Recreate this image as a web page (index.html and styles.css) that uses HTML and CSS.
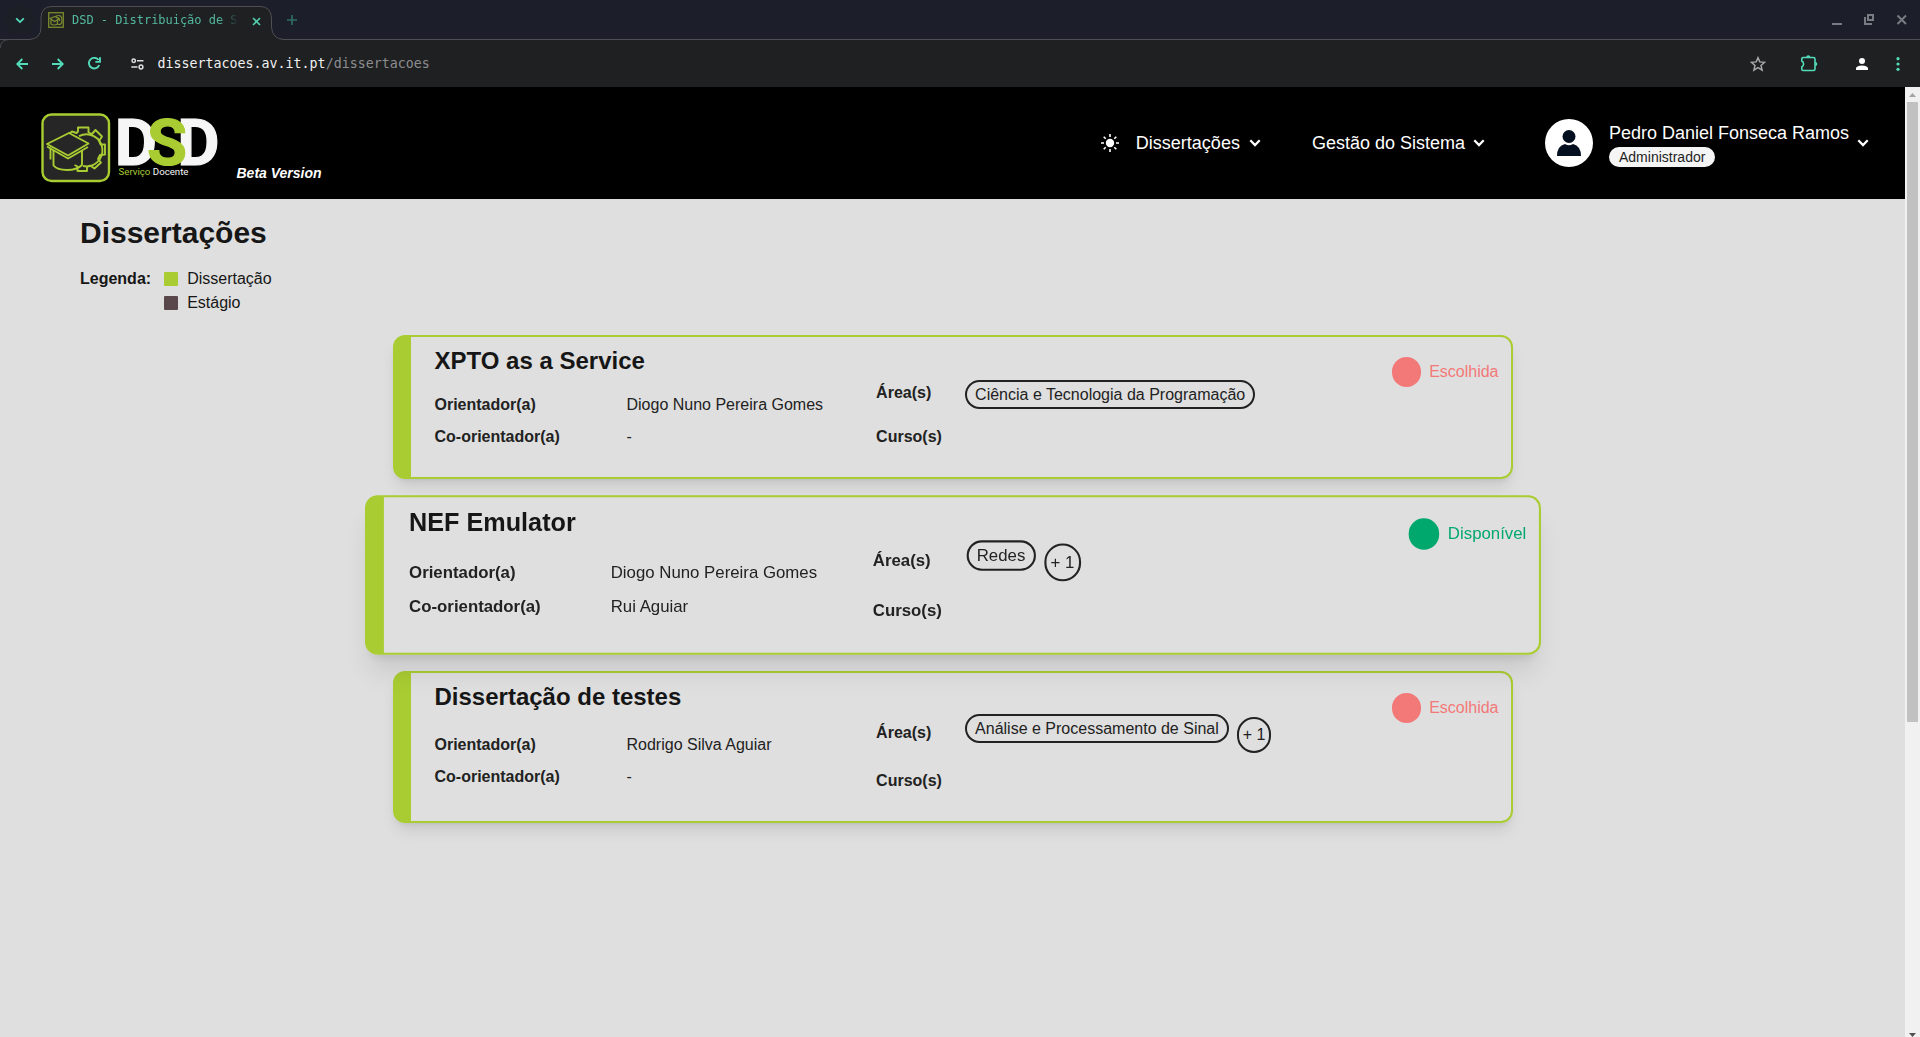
FILE: index.html
```html
<!DOCTYPE html>
<html lang="pt">
<head>
<meta charset="utf-8">
<title>DSD - Distribuição de Serviço Docente</title>
<link rel="stylesheet" href="styles.css">
</head>
<body>
<svg class="defs" width="0" height="0">
  <symbol id="chevron" viewBox="0 0 12 8"><path d="M1.3 1.3 6 6 10.7 1.3" fill="none" stroke="currentColor" stroke-width="2.3"/></symbol>
  <symbol id="emblem" viewBox="0 0 70 70">
    <rect x="1.5" y="1.5" width="66.5" height="66.5" rx="9" fill="#262626" stroke="#a9cc32" stroke-width="2.4"/>
    <g fill="none" stroke="#a9cc32" stroke-width="1.9" stroke-linejoin="round">
      <path d="M28 20.500L31 18.500L35.500 20L37 18.500V14.500H47.500V19.500L51 21L54.500 17L61 23.500L58 28L59.500 31.500H64V41.500L59 42L57 46L60 49.500L53.500 55.500L49 52.500L46 54V58H36.500V53.500L33.500 52"/>
      <path d="M38 23.200A16 16 0 1 1 42 53"/>
      <path d="M6 31 28 20 47.500 30.500 27 42.500Z" fill="#262626"/>
      <path d="M6 33.500 27 45.500 47 34" />
      <path d="M12.500 37V52.500Q16 57 26 57T41 52V37.500"/>
      <path d="M9.500 34.500V46.500"/>
    </g>
  </symbol>
</svg>
<div class="window">
  <div class="tabstrip">
    <div class="tab-search"><svg width="10" height="7" viewBox="0 0 10 7"><path d="M1.200 1.300 5 5.100 8.800 1.300" fill="none" stroke="#53dcba" stroke-width="1.800"/></svg></div>
    <div class="tab">
      <svg class="tab-shape" width="284" height="42" viewBox="0 0 284 42"><path d="M0 47V42C0 39 4 33.500 9 33.500H29Q41 33 41 21V12Q41 .5 52 .5H260Q271 .5 271.500 12V21Q272 33 284 33.500V47Z" fill="#1f2022"/><path d="M0 42Q1 33.500 9 33.500H29Q41 33 41 21V12Q41 .5 52 .5H260Q271 .5 271.500 12V21Q272 33 284 33.500" fill="none" stroke="#4e4e54"/></svg>
      <svg class="favicon" width="16" height="16" viewBox="0 0 16 16"><rect x=".7" y=".7" width="14.600" height="14.600" fill="#262626" stroke="#79882c" stroke-width="1.300"/><path d="M2 6.500 7 4.500 11 6.800 6.500 9.500ZM3 8V12Q6 14 9.500 12V8M8 4Q14 2 14 8T9 12M9.500 5.500Q12 6 11.500 9" fill="none" stroke="#7b8d2e" stroke-width="1.200"/></svg>
      <span class="tab-title">DSD - Distribuição de S</span>
      <svg class="tab-close" width="9" height="9" viewBox="0 0 9 9"><path d="M1 1 8 8M8 1 1 8" stroke="#53c9ab" stroke-width="1.700"/></svg>
    </div>
    <svg class="new-tab" width="10" height="10" viewBox="0 0 10 10"><path d="M5 0V10M0 5H10" stroke="#2f6c63" stroke-width="1.700"/></svg>
    <div class="window-buttons">
      <svg width="76" height="12" viewBox="0 0 76 12" fill="none" stroke="#797b82"><path d="M0 10H10" stroke-width="2"/><path d="M36 1H41V6H36Z M33 3V10H40" stroke-width="2"/><path d="M65.500 1.500 74 10M74 1.500 65.500 10" stroke-width="2"/></svg>
    </div>
  </div>
  <div class="toolbar">
    <div class="nav-icons">
      <svg width="12" height="12" viewBox="0 0 12 12"><path d="M12 6H1.500M6.300 1 1.300 6 6.300 11"/></svg>
      <svg width="12" height="12" viewBox="0 0 12 12"><path d="M0 6H10.500M5.700 1 10.700 6 5.700 11"/></svg>
      <svg width="13" height="13" viewBox="0 0 13 13"><path d="M11.200 8A5.300 5.300 0 1 1 10.500 3M12 .3V4.900H7.300"/></svg>
    </div>
    <svg class="site-info" width="13" height="12" viewBox="0 0 13 12" fill="none" stroke="#dedede" stroke-width="1.500"><circle cx="2.700" cy="2.700" r="1.700"/><path d="M6 2.700H12.500M.3 9H6.500"/><circle cx="10" cy="9" r="1.900"/></svg>
    <span class="url">dissertacoes.av.it.pt<span class="url-path">/dissertacoes</span></span>
    <div class="toolbar-end">
      <svg width="16" height="16" viewBox="0 0 16 16"><path d="M8 1.700 9.800 5.900 14.600 6.300 11 9.500 12.100 14.200 8 11.700 3.900 14.200 5 9.500 1.400 6.300 6.200 5.900Z" fill="none" stroke="#a8a8a9" stroke-width="1.500"/></svg>
      <svg width="18" height="18" viewBox="0 0 18 18"><path d="M3 2.500H13.500Q15 2.500 15 4V14Q15 15.500 13.500 15.500H3Q1.800 15.500 1.800 14.300V12Q3.600 11 3.600 9T1.800 6V3.700Q1.800 2.500 3 2.500Z" fill="none" stroke="#53dcba" stroke-width="1.600"/><path d="M6.300 2.300a2 2 0 0 1 4 0ZM15.300 7a2 2 0 0 1 0 4Z" fill="#53dcba"/></svg>
      <svg width="12" height="12" viewBox="0 0 12 12" fill="#fff"><circle cx="6" cy="3" r="3"/><path d="M0 12V10Q1 7.500 6 7.500T12 10V12Z"/></svg>
      <svg width="4" height="14" viewBox="0 0 4 14" fill="#53dcba"><circle cx="2" cy="1.700" r="1.600"/><circle cx="2" cy="7" r="1.600"/><circle cx="2" cy="12.300" r="1.600"/></svg>
    </div>
  </div>
  <div class="viewport">
    <div class="page">
      <header class="header">
        <svg class="logo" width="180" height="72" viewBox="0 0 180 72">
          <use href="#emblem" width="70" height="70" x="0" y="0"/>
          <g class="logo-letters"><text x="73.700" y="51.500" fill="#f6f6f6" stroke="#f6f6f6">D</text><text x="136.200" y="51.500" fill="#f6f6f6" stroke="#f6f6f6">D</text><text x="106" y="51.500" fill="#a9cc32" stroke="#a9cc32">S</text></g>
          <text class="logo-sub" x="77.500" y="62.300" textLength="70" fill="#f6f6f6"><tspan fill="#a9cc32">Serviço</tspan> Docente</text>
        </svg>
        <span class="beta">Beta Version</span>
        <nav class="nav">
          <svg class="sun" width="18" height="18" viewBox="0 0 18 18"><circle cx="9" cy="9" r="4.200" fill="#fff"/><path d="M9 0V3M9 15V18M0 9H3M15 9H18M2.700 2.700 4.700 4.700M13.300 13.300 15.300 15.300M2.700 15.300 4.700 13.300M13.300 4.700 15.300 2.700" stroke="#fff" stroke-width="1.600"/></svg>
          <a class="nav-item">Dissertações<svg class="chevron"><use href="#chevron"/></svg></a>
          <a class="nav-item nav-system">Gestão do Sistema<svg class="chevron"><use href="#chevron"/></svg></a>
          <div class="user">
            <svg width="48" height="48" viewBox="0 0 48 48"><circle cx="24" cy="24" r="24" fill="#fff"/><circle cx="24" cy="17.500" r="6.500" fill="#04101f"/><path d="M12 37Q12 27 20 25Q24 27.500 28 25Q36 27 36 37Z" fill="#04101f"/></svg>
            <div class="user-text"><span class="user-name">Pedro Daniel Fonseca Ramos</span><span class="role">Administrador</span></div>
            <svg class="chevron"><use href="#chevron"/></svg>
          </div>
        </nav>
      </header>
      <main class="main">
        <h1>Dissertações</h1>
        <div class="legend">
          <b>Legenda:</b>
          <ul>
            <li><i class="swatch swatch-green"></i>Dissertação</li>
            <li><i class="swatch swatch-brown"></i>Estágio</li>
          </ul>
        </div>
        <div class="cards">
          <article class="card">
            <section class="people">
              <h2>XPTO as a Service</h2>
              <dl><dt>Orientador(a)</dt><dd>Diogo Nuno Pereira Gomes</dd><dt>Co-orientador(a)</dt><dd>-</dd></dl>
            </section>
            <section class="topics">
              <div class="areas"><b>Área(s)</b><span class="tag">Ciência e Tecnologia da Programação</span></div>
              <b>Curso(s)</b>
            </section>
            <div class="status taken"><i class="dot"></i>Escolhida</div>
          </article>
          <article class="card card-tall card-active">
            <section class="people">
              <h2>NEF Emulator</h2>
              <dl><dt>Orientador(a)</dt><dd>Diogo Nuno Pereira Gomes</dd><dt>Co-orientador(a)</dt><dd>Rui Aguiar</dd></dl>
            </section>
            <section class="topics">
              <div class="areas"><b>Área(s)</b><span class="tag">Redes</span><span class="more">+ 1</span></div>
              <b>Curso(s)</b>
            </section>
            <div class="status free"><i class="dot"></i>Disponível</div>
          </article>
          <article class="card card-tall">
            <section class="people">
              <h2>Dissertação de testes</h2>
              <dl><dt>Orientador(a)</dt><dd>Rodrigo Silva Aguiar</dd><dt>Co-orientador(a)</dt><dd>-</dd></dl>
            </section>
            <section class="topics">
              <div class="areas"><b>Área(s)</b><span class="tag">Análise e Processamento de Sinal</span><span class="more">+ 1</span></div>
              <b>Curso(s)</b>
            </section>
            <div class="status taken"><i class="dot"></i>Escolhida</div>
          </article>
        </div>
      </main>
    </div>
    <div class="scrollbar">
      <svg width="7" height="4" viewBox="0 0 7 4"><path d="M0 4 3.500 0 7 4Z" fill="#a3a3a3"/></svg>
      <div class="thumb"></div>
      <svg class="down" width="7" height="4" viewBox="0 0 7 4"><path d="M0 0 3.500 4 7 0Z" fill="#505050"/></svg>
    </div>
  </div>
</div>
</body>
</html>
```
FILE: styles.css
```css
* { box-sizing: border-box; }
body { margin: 0; overflow: hidden; font-family: "Liberation Sans", Arial, sans-serif; font-size: 16px; line-height: 24px; color: #161616; }
svg { display: block; flex: none; }
.defs { position: absolute; }
h1, h2, ul, dl, dd { margin: 0; padding: 0; }
.window { height: 1037px; display: flex; flex-direction: column; background: #dfdfdf; }

.tabstrip { height: 40px; flex: none; display: flex; background: #1c1e2a; border-bottom: 1px solid #4e4e54; font: 12px/16px "DejaVu Sans Mono", monospace; }
.tab-search { width: 28px; height: 28px; margin: 6px 6px 0; border-radius: 10px; background: #1d1f26; display: grid; place-items: center; flex: none; }
.tab { position: relative; width: 232px; height: 34px; margin-top: 6px; padding: 6px 11px 0 8px; display: flex; flex: none; }
.tab-shape { position: absolute; left: -40px; top: 0; }
.favicon, .tab-title, .tab-close { position: relative; }
.tab-title { width: 168px; margin-left: 8px; white-space: nowrap; color: #53b8a0; letter-spacing: -.03px; mask-image: linear-gradient(90deg, #000 146px, transparent 167px); }
.tab-close { margin: 5px 0 0 11.500px; }
.new-tab { margin: 15px 0 0 15px; }
.window-buttons { margin: 14px 12px 0 auto; }

.toolbar { height: 47px; flex: none; display: flex; align-items: center; background: #1f2022; padding: 0 20px 0 16px; }
.nav-icons { display: flex; align-items: center; gap: 24px; fill: none; stroke: #53dcba; stroke-width: 1.900; }
.site-info { margin-left: 29.500px; }
.url { margin-left: 14px; font: 13.300px/20px "DejaVu Sans Mono", monospace; color: #f0f0f0; }
.url-path { color: #8d8d8f; }
.toolbar-end { margin-left: auto; display: flex; align-items: center; }
.toolbar-end svg:nth-child(2) { margin-left: 34px; }
.toolbar-end svg:nth-child(3) { margin-left: 38px; }
.toolbar-end svg:nth-child(4) { margin-left: 28px; }

.viewport { flex: 1; display: flex; min-height: 0; }
.page { flex: 1; }
.scrollbar { width: 15px; padding: 6px 2px 0; background: #f1f1f1; display: flex; flex-direction: column; align-items: center; }
.thumb { width: 11px; height: 620px; margin-top: 5px; background: #c1c1c1; }
.down { margin: auto 0 0; }

.header { height: 112px; background: #000; color: #fff; display: flex; padding: 0 36px 0 41px; }
.logo { margin-top: 26px; overflow: visible; }
.logo-letters { font: 700 65px Roboto, sans-serif; stroke-width: 1.200; }
.logo-sub { font: 9.700px Roboto, sans-serif; }
.beta { margin: 74px 0 0 15.500px; font: italic bold 14px/24px "Liberation Sans", Arial, sans-serif; height: 24px; }
.nav { margin-left: auto; display: flex; align-items: center; font-size: 18px; line-height: 28px; white-space: nowrap; }
.nav-item { display: flex; align-items: center; gap: 9px; margin-left: 17px; }
.nav-item.nav-system { margin-left: 51px; }
.chevron { width: 12px; height: 8px; }
.nav-system { gap: 8px; }
.user { display: flex; align-items: center; margin-left: 60px; }
.user-text { margin: 0 8px 0 16px; display: flex; flex-direction: column; align-items: flex-start; width: 240px; }
.user-name { line-height: 28px; }
.role { height: 20px; padding: 0 10px; border-radius: 10px; background: #f5f5f5; color: #1e1e1e; font-size: 14px; line-height: 20px; }

.main { padding: 16px 80px; }
h1 { font-size: 30px; line-height: 36px; }
.legend { display: flex; gap: 13px; margin-top: 16px; }
.legend ul { list-style: none; }
.legend li { display: flex; align-items: center; gap: 9px; }
.swatch { width: 14px; height: 14px; border-radius: 1px; }
.swatch-green { background: #a9cc32; }
.swatch-brown { background: #5a474b; }

.cards { width: 1120px; margin: 20px auto 0; display: grid; gap: 20px; }
.card { height: 144px; border: 2px solid #a9cc32; border-left-width: 18px; border-radius: 12px; padding: 8px 12px 0 24px; display: flex; color: #222; box-shadow: 0 10px 15px -3px rgba(0,0,0,.1), 0 4px 6px -4px rgba(0,0,0,.1); }
.card-tall { height: 152px; }
.card-active { transform: scale(1.05); box-shadow: 0 20px 25px -5px rgba(0,0,0,.1), 0 8px 10px -6px rgba(0,0,0,.1); }
h2 { font-size: 24px; line-height: 32px; color: #161616; }
.people { width: 441.600px; }
.people dl { display: grid; grid-template-columns: 192px 1fr; row-gap: 8px; margin-top: 16px; }
.card-tall dl { margin-top: 20px; }
.people dt { font-weight: bold; }
.topics { flex: 1; padding-top: 35px; }
.areas { display: flex; height: 45px; }
.areas b { width: 89px; padding-top: 1px; }
.tag { height: 29px; padding: 1px 8px 0; border: 2px solid #222; border-radius: 14.500px; white-space: nowrap; }
.card-tall .topics { padding-top: 33px; }
.card-tall .areas { height: 55px; }
.card-tall .areas b { padding-top: 7px; }
.more { height: 36px; margin: 3px 0 0 8px; padding: 4px 4px 0; border: 2px solid #222; border-radius: 18px; }
.status { display: flex; align-items: center; gap: 8px; height: 30px; margin-top: 12px; }
.dot { width: 29.500px; height: 29.500px; border-radius: 50%; }
.taken { color: #f37878; }
.taken .dot { background: #f37878; }
.free { color: #00a86e; }
.free .dot { background: #00a86e; }
```
